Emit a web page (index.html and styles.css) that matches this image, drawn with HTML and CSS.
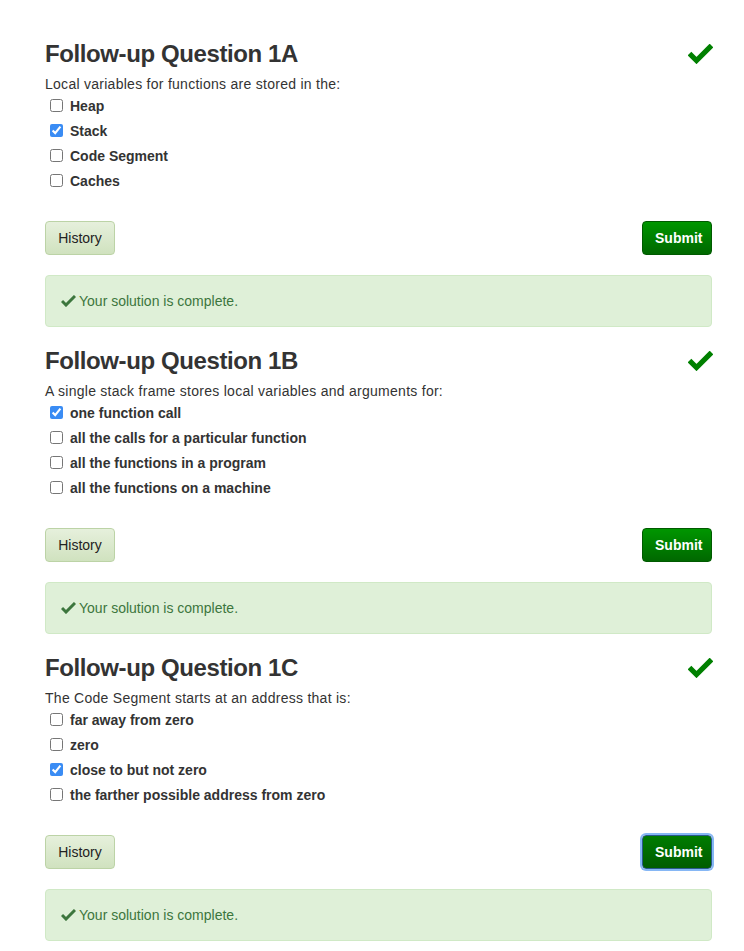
FILE: index.html
```html
<!DOCTYPE html>
<html>
<head>
<meta charset="utf-8">
<link rel="stylesheet" href="styles.css">
</head>
<body>
<main class="page">
  <section class="question">
    <header class="q-head">
      <h2 class="q-title">Follow-up Question 1A</h2>
      <svg class="q-ok" width="25" height="20" viewBox="0 0 25 20"><polyline points="1.5,9.5 8.5,16.5 23.5,1.5" fill="none" stroke="#008000" stroke-width="5.2" stroke-linejoin="miter"/></svg>
    </header>
    <p class="q-text">Local variables for functions are stored in the:</p>
    <ul class="options">
      <li><label><input type="checkbox"><span>Heap</span></label></li>
      <li><label><input type="checkbox" checked><span>Stack</span></label></li>
      <li><label><input type="checkbox"><span>Code Segment</span></label></li>
      <li><label><input type="checkbox"><span>Caches</span></label></li>
    </ul>
    <div class="actions">
      <button class="btn btn-history">History</button>
      <button class="btn btn-submit">Submit</button>
    </div>
    <div class="alert"><svg class="a-ok" width="15" height="12" viewBox="0 0 15 12"><polyline points="1,6 5,10 14,1" fill="none" stroke="#3c763d" stroke-width="3"/></svg>Your solution is complete.</div>
  </section>

  <section class="question">
    <header class="q-head">
      <h2 class="q-title">Follow-up Question 1B</h2>
      <svg class="q-ok" width="25" height="20" viewBox="0 0 25 20"><polyline points="1.5,9.5 8.5,16.5 23.5,1.5" fill="none" stroke="#008000" stroke-width="5.2" stroke-linejoin="miter"/></svg>
    </header>
    <p class="q-text">A single stack frame stores local variables and arguments for:</p>
    <ul class="options">
      <li><label><input type="checkbox" checked><span>one function call</span></label></li>
      <li><label><input type="checkbox"><span>all the calls for a particular function</span></label></li>
      <li><label><input type="checkbox"><span>all the functions in a program</span></label></li>
      <li><label><input type="checkbox"><span>all the functions on a machine</span></label></li>
    </ul>
    <div class="actions">
      <button class="btn btn-history">History</button>
      <button class="btn btn-submit">Submit</button>
    </div>
    <div class="alert"><svg class="a-ok" width="15" height="12" viewBox="0 0 15 12"><polyline points="1,6 5,10 14,1" fill="none" stroke="#3c763d" stroke-width="3"/></svg>Your solution is complete.</div>
  </section>

  <section class="question">
    <header class="q-head">
      <h2 class="q-title">Follow-up Question 1C</h2>
      <svg class="q-ok" width="25" height="20" viewBox="0 0 25 20"><polyline points="1.5,9.5 8.5,16.5 23.5,1.5" fill="none" stroke="#008000" stroke-width="5.2" stroke-linejoin="miter"/></svg>
    </header>
    <p class="q-text">The Code Segment starts at an address that is:</p>
    <ul class="options">
      <li><label><input type="checkbox"><span>far away from zero</span></label></li>
      <li><label><input type="checkbox"><span>zero</span></label></li>
      <li><label><input type="checkbox" checked><span>close to but not zero</span></label></li>
      <li><label><input type="checkbox"><span>the farther possible address from zero</span></label></li>
    </ul>
    <div class="actions">
      <button class="btn btn-history">History</button>
      <button class="btn btn-submit btn-focus">Submit</button>
    </div>
    <div class="alert"><svg class="a-ok" width="15" height="12" viewBox="0 0 15 12"><polyline points="1,6 5,10 14,1" fill="none" stroke="#3c763d" stroke-width="3"/></svg>Your solution is complete.</div>
  </section>
</main>
</body>
</html>
```
FILE: styles.css
```css
html, body {
  margin: 0;
  padding: 0;
  background: #fff;
}
body {
  font-family: "Liberation Sans", Arial, Helvetica, sans-serif;
  font-size: 14px;
  color: #333;
}
.page {
  width: 667px;
  padding: 41px 0 0 45px;
  display: flex;
  flex-direction: column;
  gap: 21px;
}
.question {
  display: flex;
  flex-direction: column;
}
.q-head {
  display: flex;
  justify-content: space-between;
  align-items: flex-start;
  height: 26px;
}
.q-title {
  margin: 0;
  font-size: 24px;
  line-height: 26px;
  font-weight: bold;
  letter-spacing: -0.4px;
  color: #333;
}
.q-ok {
  margin-top: 3px;
  margin-right: -1px;
}
.q-text {
  margin: 7px 0 0 0;
  line-height: 20px;
  letter-spacing: 0.27px;
}
.options {
  list-style: none;
  margin: -1px 0 0 0;
  padding: 0;
}
.options li {
  height: 25px;
  display: flex;
  align-items: center;
}
.options label {
  display: flex;
  align-items: center;
  font-weight: bold;
}
.options input {
  width: 13px;
  height: 13px;
  margin: 0 7px 0 5px;
  accent-color: #3a8cf4;
}
.actions {
  margin-top: 28px;
  display: flex;
  justify-content: space-between;
}
.btn {
  height: 34px;
  padding: 0 12px;
  font-family: "Liberation Sans", Arial, Helvetica, sans-serif;
  font-size: 14px;
  border-radius: 4px;
  cursor: pointer;
}
.btn-history {
  width: 70px;
  color: #222;
  background: linear-gradient(#e6f0dc, #d0e2bf);
  border: 1px solid #bcd3a6;
}
.btn-submit {
  width: 70px;
  color: #fff;
  font-weight: bold;
  background: linear-gradient(#009600, #006800);
  border: 1px solid #005a00;
}
.btn-focus {
  background: linear-gradient(#007c00, #005c00);
  box-shadow: 0 0 0 2px #86b7f5;
  border-color: #2a5a8a;
}
.alert {
  margin-top: 20px;
  height: 52px;
  box-sizing: border-box;
  padding: 15px;
  line-height: 20px;
  background: #dff0d8;
  border: 1px solid #d0e9c6;
  border-radius: 4px;
  color: #3c763d;
  display: flex;
  align-items: center;
}
.a-ok {
  margin-right: 3px;
}
```
